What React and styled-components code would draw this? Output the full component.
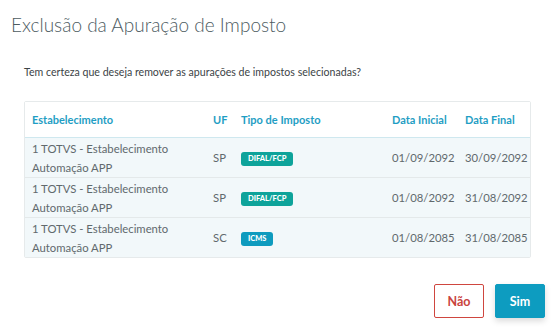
import React from 'react';
import styled, { createGlobalStyle } from 'styled-components';

const GlobalStyle = createGlobalStyle`
  html, body {
    margin: 0;
    padding: 0;
    background: #ffffff;
    font-family: Lato, "Open Sans", sans-serif;
  }
`;

const rows = [
  { est: '1 TOTVS - Estabelecimento Automação APP', uf: 'SP', tipo: 'DIFAL/FCP', inicio: '01/09/2092', fim: '30/09/2092' },
  { est: '1 TOTVS - Estabelecimento Automação APP', uf: 'SP', tipo: 'DIFAL/FCP', inicio: '01/08/2092', fim: '31/08/2092' },
  { est: '1 TOTVS - Estabelecimento Automação APP', uf: 'SC', tipo: 'ICMS', inicio: '01/08/2085', fim: '31/08/2085' },
];

const Modal = styled.div`
  width: 557px;
  height: 333px;
  box-sizing: border-box;
  padding: 12px 12px 0 11px;
  display: flex;
  flex-direction: column;
`;

const Title = styled.h1`
  margin: 0;
  font-size: 19px;
  font-weight: 300;
  color: #4d5b5f;
  line-height: 26px;
`;

const Body = styled.div`
  padding: 27px 14px 0 13px;
`;

const Question = styled.p`
  margin: 0 0 22px;
  font-size: 10.6px;
  color: #3c4346;
  line-height: 14px;
`;

const Table = styled.div`
  border: 1px solid #e6eaeb;
  border-radius: 2px;
  width: 507px;
  box-sizing: border-box;
`;

const Grid = styled.div`
  display: grid;
  grid-template-columns: 181px 28px 151px 73px 1fr;
  align-items: center;
  padding-left: 7px;
  height: ${p => (p.$head ? '35px' : '39px')};
  background: ${p => (p.$head ? '#ffffff' : '#f2f8fa')};
  border-bottom: 1px solid ${p => (p.$head ? '#cfe8ef' : '#e4e9ea')};
  &:last-child {
    border-bottom: none;
  }
`;

const Th = styled.div`
  font-size: 11px;
  font-weight: 700;
  color: #1f9ec4;
`;

const Td = styled.div`
  font-size: 11.3px;
  color: #61696d;
  line-height: 19px;
`;

const Badge = styled.span`
  display: inline-block;
  font-size: 7.5px;
  font-weight: 900;
  color: #ffffff;
  background: ${p => (p.$kind === 'ICMS' ? '#0e9bbe' : '#0ea39a')};
  border-radius: 3px;
  padding: 0 7px;
  height: 14px;
  line-height: 14px;
  vertical-align: middle;
`;

const Footer = styled.div`
  display: flex;
  justify-content: flex-end;
  gap: 11px;
  margin-top: 26px;
`;

const Button = styled.button`
  width: 50px;
  height: 34px;
  box-sizing: border-box;
  border-radius: 2px;
  font-family: Lato, "Open Sans", sans-serif;
  font-size: 12.5px;
  font-weight: 700;
  cursor: pointer;
  border: 1px solid ${p => (p.$primary ? '#0d9cc0' : '#cf463f')};
  background: ${p => (p.$primary ? '#0d9cc0' : '#ffffff')};
  color: ${p => (p.$primary ? '#ffffff' : '#c9433d')};
  box-shadow: ${p => (p.$primary ? '0 3px 6px rgba(0,0,0,0.15)' : 'none')};
`;

export default function App() {
  return (
    <>
      <GlobalStyle />
      <Modal>
        <Title>Exclusão da Apuração de Imposto</Title>
        <Body>
          <Question>Tem certeza que deseja remover as apurações de impostos selecionadas?</Question>
          <Table>
            <Grid $head>
              <Th>Estabelecimento</Th>
              <Th>UF</Th>
              <Th>Tipo de Imposto</Th>
              <Th>Data Inicial</Th>
              <Th>Data Final</Th>
            </Grid>
            {rows.map((r, i) => (
              <Grid key={i}>
                <Td>{r.est}</Td>
                <Td>{r.uf}</Td>
                <Td><Badge $kind={r.tipo}>{r.tipo}</Badge></Td>
                <Td>{r.inicio}</Td>
                <Td>{r.fim}</Td>
              </Grid>
            ))}
          </Table>
        </Body>
        <Footer>
          <Button>Não</Button>
          <Button $primary>Sim</Button>
        </Footer>
      </Modal>
    </>
  );
}
